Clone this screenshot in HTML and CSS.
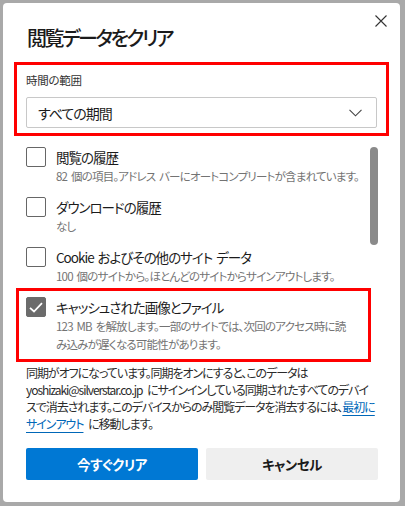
FILE: index.html
```html
<!DOCTYPE html>
<html lang="ja">
<head>
  <title>閲覧データをクリア</title>
  <meta charset="UTF-8">
  <meta name="viewport" content="width=device-width, initial-scale=1.0">
  <link rel="stylesheet" href="styles.css">
</head>
<body>
  <div class="dialog">
    <div class="header">
      <h1 class="title">閲覧データをクリア</h1>
      <button class="close" aria-label="閉じる">
        <svg width="12" height="12" viewBox="0 0 12 12"><path d="M0.5 0.5 L11.5 11.5 M11.5 0.5 L0.5 11.5" stroke="#333" stroke-width="1.1" fill="none"/></svg>
      </button>
    </div>

    <div class="range mark">
      <div class="range-label">時間の範囲</div>
      <div class="select">
        <span>すべての期間</span>
        <svg width="13" height="8" viewBox="0 0 13 8"><path d="M0.5 0.8 L6.5 6.8 L12.5 0.8" stroke="#444" stroke-width="1.1" fill="none"/></svg>
      </div>
    </div>

    <div class="list-row">
      <div class="list">
        <div class="item">
          <div class="box"></div>
          <div class="item-text">
            <div class="item-title">閲覧の履歴</div>
            <div class="item-sub">82 個の項目。アドレス バーにオートコンプリートが含まれています。</div>
          </div>
        </div>
        <div class="item">
          <div class="box"></div>
          <div class="item-text">
            <div class="item-title">ダウンロードの履歴</div>
            <div class="item-sub">なし</div>
          </div>
        </div>
        <div class="item">
          <div class="box"></div>
          <div class="item-text">
            <div class="item-title">Cookie およびその他のサイト データ</div>
            <div class="item-sub">100 個のサイトから。ほとんどのサイトからサインアウトします。</div>
          </div>
        </div>
        <div class="item mark">
          <div class="box checked">
            <svg width="14" height="11" viewBox="0 0 14 11"><path d="M1 5.8 L5 9.5 L13 1.2" stroke="#fff" stroke-width="1.8" fill="none"/></svg>
          </div>
          <div class="item-text">
            <div class="item-title">キャッシュされた画像とファイル</div>
            <div class="item-sub">123 MB を解放します。一部のサイトでは、次回のアクセス時に読<br>み込みが遅くなる可能性があります。</div>
          </div>
        </div>
      </div>
      <div class="scrollbar"></div>
    </div>

    <p class="sync">同期がオフになっています。同期をオンにすると、このデータは<br>yoshizaki@silverstar.co.jp にサインインしている同期されたすべてのデバイ<br>スで消去されます。このデバイスからのみ閲覧データを消去するには、<a href="#">最初に<br>サインアウト</a> に移動します。</p>

    <div class="buttons">
      <button class="btn primary">今すぐクリア</button>
      <button class="btn">キャンセル</button>
    </div>
  </div>
</body>
</html>
```

FILE: styles.css
```css
body { margin: 0; background: #a9a9a9; font-family: "Noto Sans CJK JP", sans-serif; font-feature-settings: "palt"; color: #1b1b1b; }
.dialog { width: 397px; height: 499px; margin: 3px 0 0 3px; background: #fff; border-radius: 4px; padding: 0 11px; box-sizing: border-box; }

.header { display: flex; justify-content: space-between; align-items: flex-start; padding: 12px 2px 0 13px; }
.title { margin: 9px 0 0; font-size: 20px; line-height: 28px; font-weight: 500; letter-spacing: -2.5px; color: #1b1b1b; }
.close { border: none; background: none; padding: 0; width: 12px; height: 12px; display: flex; }

.mark { border: 3px solid #f00; }
.range { margin-top: 10px; padding: 6px 9px 5px; }
.range-label { font-size: 11.5px; line-height: 18px; letter-spacing: -0.3px; color: #333; margin-bottom: 8px; }
.select { height: 31px; box-sizing: border-box; border: 1px solid #c8c8c8; border-radius: 2px; display: flex; align-items: center; justify-content: space-between; padding: 0 14px 0 11px; font-size: 14px; letter-spacing: -1px; color: #1b1b1b; }

.list-row { display: flex; padding-left: 2px; margin-top: 2px; }
.list { width: 355px; }
.item { display: flex; gap: 10px; border: 3px solid transparent; padding: 6px 7px 0; height: 50px; box-sizing: border-box; }
.item.mark { border-color: #f00; height: 74px; }
.box { width: 20px; height: 20px; box-sizing: border-box; border: 1px solid #666; border-radius: 2px; flex: none; display: flex; align-items: center; justify-content: center; }
.box.checked { background: #6b6b6b; border-color: #6b6b6b; }
.item-title { font-size: 13.5px; line-height: 20px; letter-spacing: -1px; word-spacing: 2px; color: #1b1b1b; white-space: nowrap; }
.item-sub { font-size: 11.5px; line-height: 18px; letter-spacing: -0.8px; word-spacing: 2px; color: #737373; white-space: nowrap; }
.scrollbar { width: 8px; height: 98px; background: #8a8a8a; border-radius: 4px; margin: 9px 0 0 -1px; }

.sync { margin: 2px 0 0; padding-left: 12px; font-size: 12px; line-height: 17px; letter-spacing: -1.05px; word-spacing: 3px; color: #2b2b2b; white-space: nowrap; }
.sync a { color: #0067b8; text-decoration: underline; text-underline-offset: 3px; }

.buttons { display: flex; gap: 8px; margin-top: 16px; padding-left: 12px; }
.btn { width: 172px; height: 32px; border: none; border-radius: 2px; background: #efefef; color: #1b1b1b; font-family: inherit; font-feature-settings: "palt"; font-size: 13.5px; font-weight: 700; letter-spacing: -0.5px; }
.btn.primary { background: #0078d4; color: #fff; }
```
